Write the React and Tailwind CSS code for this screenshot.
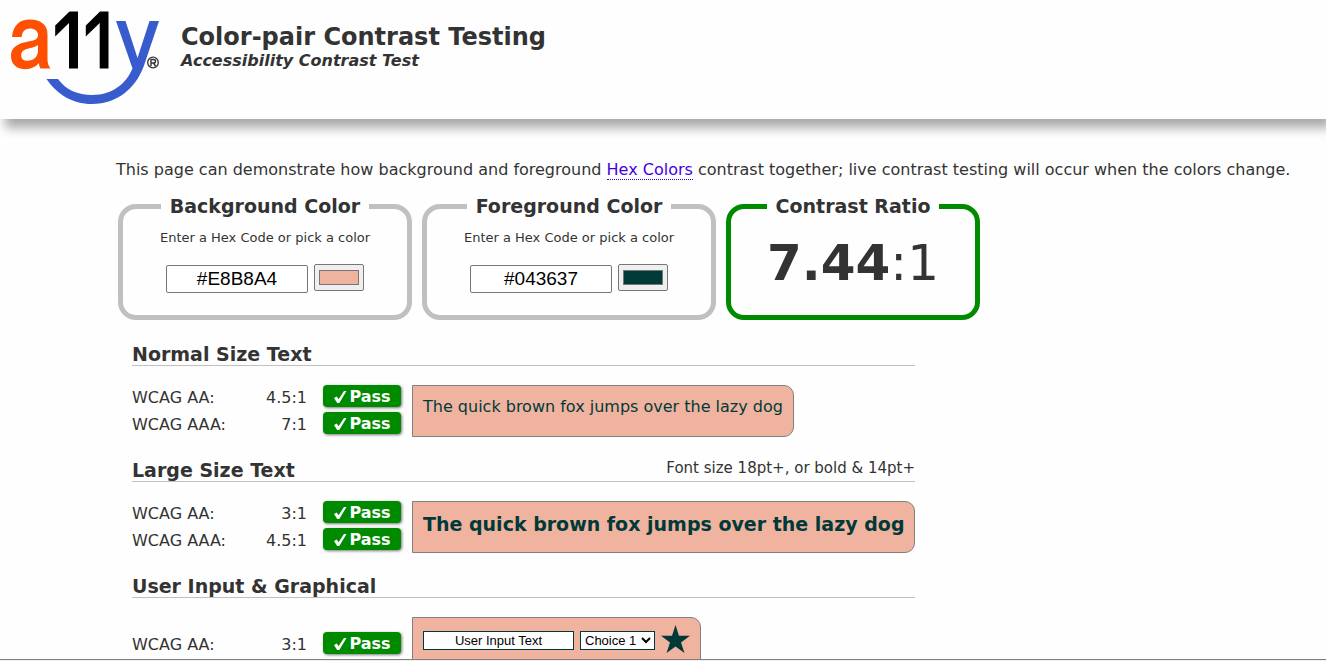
import { useState } from "react";

const BG = "#efb3a0";
const FG = "#003a38";

function Logo() {
  return (
    <svg viewBox="0 0 150 94" className="h-[94px] w-[150px] shrink-0" role="img" aria-label="a11y">
      <path
        d="M2 26C3 14 10 8.500 20 8.500C31 8.500 37.500 14 37.500 23V48C37.500 52.500 38.500 55 40.500 57.500H30.500C29.500 56 29 54 29 52C25.500 56 21 58.200 15.500 58.200C6.500 58.200 1 53 1 45C1 37.500 6 33.500 14 31.500L23 29.500C26.500 28.700 28 27 28 24C28 20 24.500 17.500 20 17.500C14.500 17.500 12.300 21 11.600 26ZM28 34C26 35.500 23 36.500 18.500 37.500C13.500 38.700 11.200 40.500 11.200 44.500C11.200 47.800 13.500 49.800 17.500 49.800C23.500 49.800 28 46 28 39.500Z"
        fill="#ff4f00"
        fillRule="evenodd"
      />
      <path d="M68 0.500V57.500H59V12L45.200 25.500V14.500L59.500 0.500ZM98.500 0.500V57.500H89.700V12L75.800 25.500V14.500L90 0.500Z" fill="#000" />
      <path
        d="M106 10H115.500L127.500 47L139.500 10H149L135.500 50C128 76 108 93 82 93C62 93 47 83 36.500 68H48C56 79 68 84 82 84C102 84 116 73 122.500 57.500Z"
        fill="#385cce"
      />
      <circle cx="143" cy="51.500" r="5.300" fill="none" stroke="#333" strokeWidth="1.300" />
      <path d="M141 55V48.500H143.500Q145.500 48.500 145.500 50.200Q145.500 52 143.500 52H141M143.500 52L145.500 55" fill="none" stroke="#333" strokeWidth="1.400" />
    </svg>
  );
}

function ColorPicker({ id, legend, code, swatch }) {
  const [text, setText] = useState(code);
  const [color, setColor] = useState(swatch);
  return (
    <fieldset className="h-[126px] w-[294px] rounded-[18px] border-[5px] border-[#c0c0c0] text-center">
      <legend className="mx-auto px-[9px] text-[19px] leading-6 font-bold">{legend}</legend>
      <label htmlFor={id} className="mt-3 block text-[13px] leading-4">
        Enter a Hex Code or pick a color
      </label>
      <div className="mt-[18px] flex items-start justify-center gap-[6px]">
        <input
          id={id}
          value={text}
          onChange={(e) => setText(e.target.value)}
          className="mt-px h-[28px] w-[142px] rounded-[2px] border border-[#767676] bg-white text-center font-['Liberation_Sans',sans-serif] text-[19px] text-black"
        />
        <input
          type="color"
          aria-label={legend}
          value={color}
          onChange={(e) => setColor(e.target.value)}
          className="h-[27px] w-[50px] rounded-[2px] border border-[#767676] bg-[#efefef] px-[2px] py-px"
        />
      </div>
    </fieldset>
  );
}

function Row({ level, ratio }) {
  return (
    <tr>
      <th scope="row" className="w-[112px] p-0 pb-[2px] text-left font-normal">{level}</th>
      <td className="w-[63px] p-0 pb-[2px] text-right">{ratio}</td>
      <td className="h-[27px] p-0 pl-4 align-top">
        <span className="flex h-[22px] w-[78px] items-center justify-center gap-[2px] rounded-[4px] bg-[#008a00] pt-[2px] leading-5 font-bold text-white shadow-[1px_1px_3px_#777]">
          <svg viewBox="0 0 14 14" className="size-[14px]" aria-hidden="true">
            <path d="M1 8L3.800 6.500L5.500 9.300L11 1H13.500L6.300 13H4.200Z" fill="#fff" />
          </svg>
          Pass
        </span>
      </td>
    </tr>
  );
}

function Section({ title, note, rows, children }) {
  return (
    <section className="w-[783px] pb-[19px]">
      <div className="flex h-6 items-center justify-between border-b border-[#c0c0c0]">
        <h2 className="text-[19px] leading-6 font-bold">{title}</h2>
        {note && <span className="pb-1 text-[15px] leading-5">{note}</span>}
      </div>
      <div className="mt-[19px] flex items-start gap-[11px]">
        <table className="shrink-0 self-center border-collapse leading-6">
          <tbody>
            {rows.map((r) => (
              <Row key={r[0]} level={r[0]} ratio={r[1]} />
            ))}
          </tbody>
        </table>
        {children}
      </div>
    </section>
  );
}

const sample = "shrink-0 rounded-r-[10px] border border-[#808080] bg-[#efb3a0] px-[10px] whitespace-nowrap text-[#003a38]";

export default function App() {
  return (
    <div className="flex h-screen flex-col overflow-hidden bg-[#fefefe] font-['Verdana','DejaVu_Sans',sans-serif] text-base text-[#333]">
      <header className="flex h-[119px] shrink-0 items-start gap-[21px] pt-[11px] pl-[10px] shadow-[5px_9px_10px_#aaa]">
        <Logo />
        <div className="pt-[11px]">
          <h1 className="text-2xl leading-[30px] font-bold">Color-pair Contrast Testing</h1>
          <p className="text-base leading-[18px] font-bold italic">Accessibility Contrast Test</p>
        </div>
      </header>
      <main className="min-h-0 flex-1 overflow-hidden pt-[41px] pl-[116px]">
        <p className="leading-5 whitespace-nowrap">
          This page can demonstrate how background and foreground{" "}
          <a href="#hex" className="border-b border-dotted border-[#4400dd] text-[#4400dd]">Hex Colors</a>{" "}
          contrast together; live contrast testing will occur when the colors change.
        </p>
        <form className="mt-[14px] ml-[2px] flex gap-[10px]">
          <ColorPicker id="bg" legend="Background Color" code="#E8B8A4" swatch={BG} />
          <ColorPicker id="fg" legend="Foreground Color" code="#043637" swatch={FG} />
          <fieldset className="h-[126px] w-[254px] rounded-[18px] border-[5px] border-[#008a00] text-center">
            <legend className="mx-auto px-[9px] text-[19px] leading-6 font-bold">Contrast Ratio</legend>
            <output className="mt-4 block text-[50px] leading-[58px]">
              <strong>7.44</strong>:1
            </output>
          </fieldset>
        </form>
        <div className="mt-[22px] ml-4">
          <Section title="Normal Size Text" rows={[["WCAG AA:", "4.5:1"], ["WCAG AAA:", "7:1"]]}>
            <p className={sample + " h-[52px] leading-[42px]"}>The quick brown fox jumps over the lazy dog</p>
          </Section>
          <Section
            title="Large Size Text"
            note="Font size 18pt+, or bold & 14pt+"
            rows={[["WCAG AA:", "3:1"], ["WCAG AAA:", "4.5:1"]]}
          >
            <p className={sample + " h-[52px] text-[19px] leading-[44px] font-bold"}>The quick brown fox jumps over the lazy dog</p>
          </Section>
          <Section title="User Input & Graphical" rows={[["WCAG AA:", "3:1"]]}>
            <div className={sample + " flex h-[57px] items-start gap-[6px] pt-[7px]"}>
              <input
                aria-label="User input"
                defaultValue="User Input Text"
                className="mt-[6px] h-[19px] w-[151px] border border-[#003a38] bg-white text-center font-['Liberation_Sans',sans-serif] text-[13px] text-black"
              />
              <select
                aria-label="Choice"
                className="mt-[6px] h-[19px] w-[75px] border border-[#003a38] bg-white font-['Liberation_Sans',sans-serif] text-[13px] text-black"
              >
                <option>Choice 1</option>
                <option>Choice 2</option>
              </select>
              <svg viewBox="0 0 30 30" className="size-[29px]" aria-hidden="true">
                <path d="M15 0L18.600 11H30L20.700 18L24.300 29L15 22.200L5.700 29L9.300 18L0 11H11.400Z" fill="#003a38" />
              </svg>
            </div>
          </Section>
        </div>
      </main>
      <footer className="h-[2px] shrink-0 border-t border-[#808080] bg-[#eee]" />
    </div>
  );
}
